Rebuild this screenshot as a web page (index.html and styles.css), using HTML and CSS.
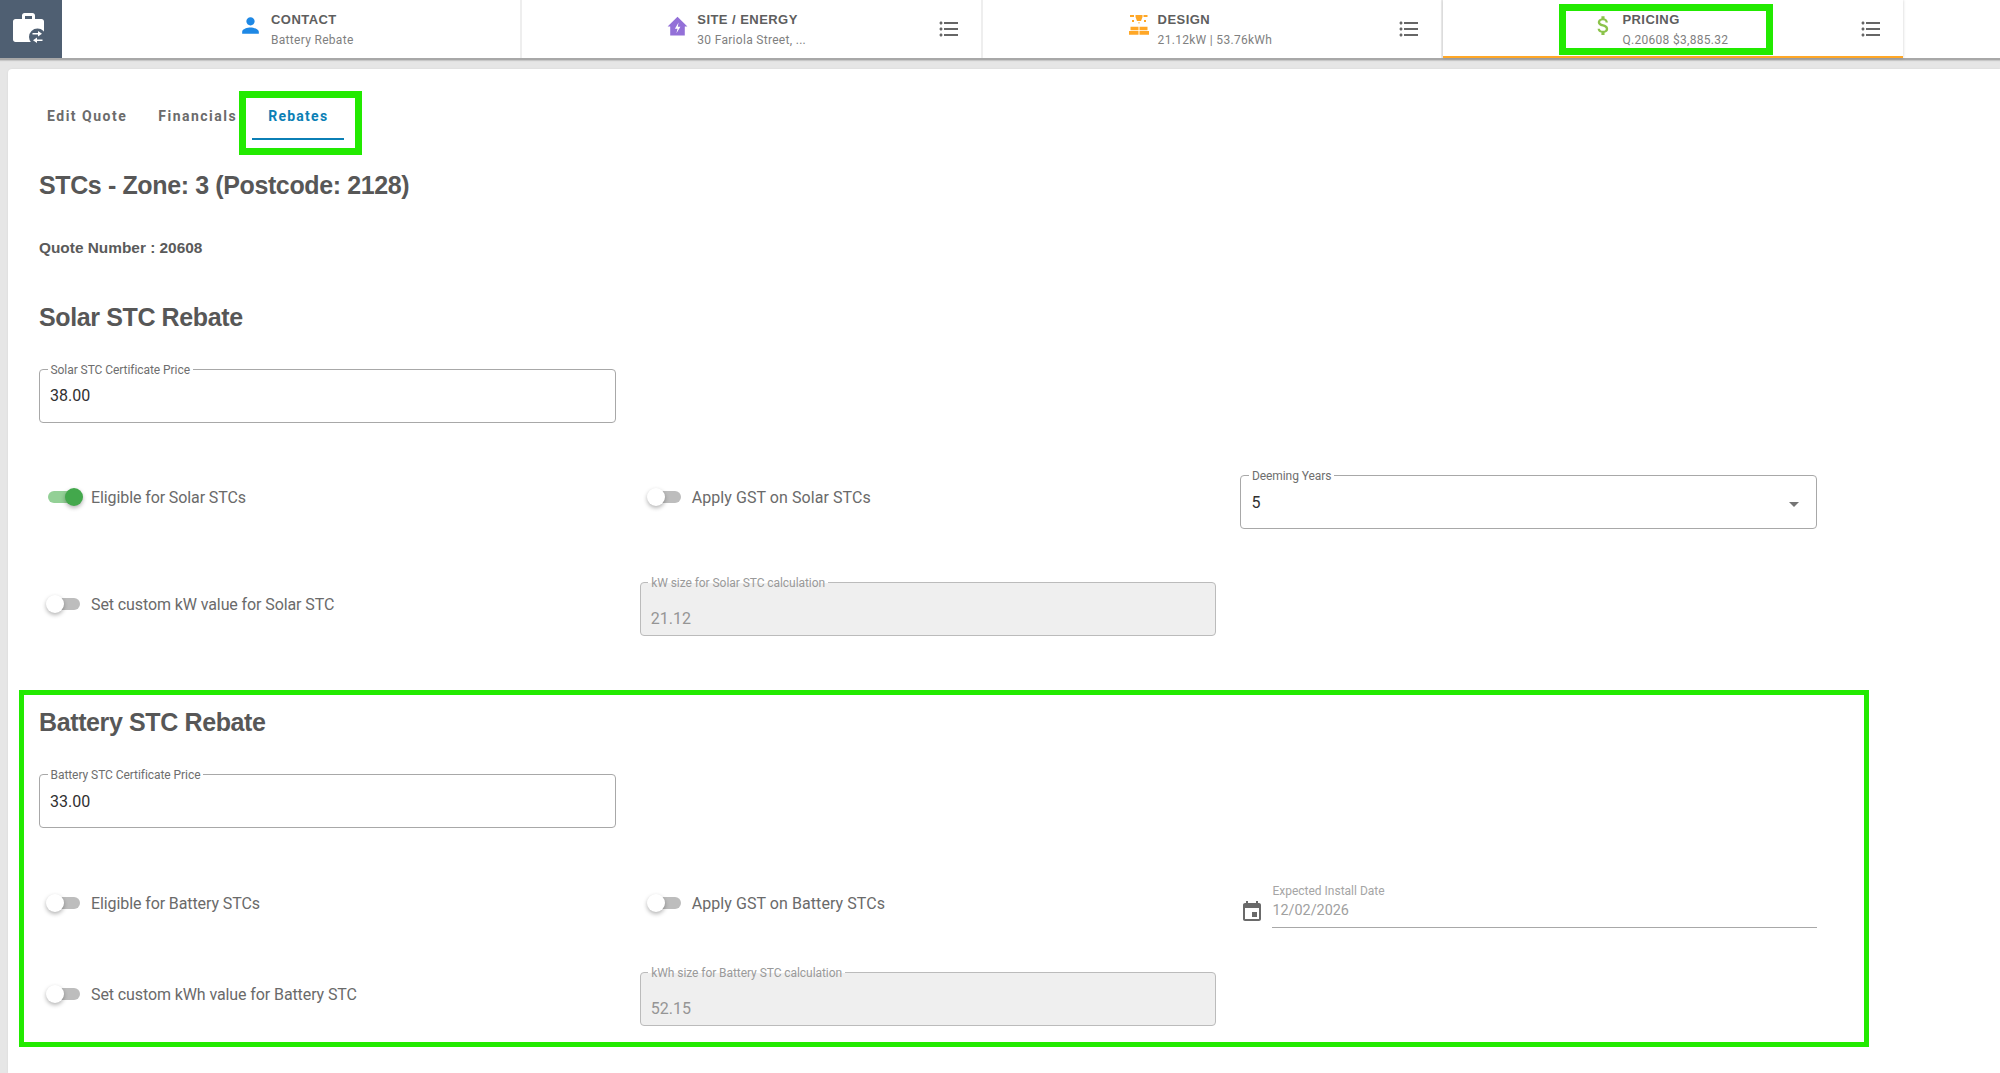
FILE: index.html
```html
<!DOCTYPE html>
<html lang="en">
<head>
<meta charset="utf-8">
<title>Rebates</title>
<link rel="stylesheet" href="styles.css">
</head>
<body>
<div class="page">
  <header class="topbar">
    <div class="logo">
      <svg width="62" height="58" viewBox="0 0 62 58"><path fill="#fff" fill-rule="evenodd" d="M22 19v-3.500c0-1.400 1.100-2.500 2.500-2.500h8c1.400 0 2.500 1.100 2.500 2.500V19h6.500c1.400 0 2.500 1.100 2.500 2.500v18c0 1.400-1.100 2.500-2.500 2.500h-26c-1.400 0-2.500-1.100-2.500-2.500v-18c0-1.400 1.100-2.500 2.500-2.500zM25 19h7v-3h-7z"/><circle cx="37.500" cy="37" r="8.500" fill="#4f5f72"/><path fill="#fff" d="M38 31l4 2.750-4 2.750v-2h-5.500v-1.500H38zM37 37.500v2h5.500V41H37v2l-4-2.750z"/></svg>
    </div>
    <div class="tab tab-contact">
      <svg class="tab-icon" viewBox="0 0 24 24"><path fill="#1e88e5" d="M12 12c2.210 0 4-1.790 4-4s-1.790-4-4-4-4 1.790-4 4 1.790 4 4 4zm0 2c-2.670 0-8 1.340-8 4v2h16v-2c0-2.660-5.330-4-8-4z"/></svg>
      <div class="tab-text"><div class="tab-title">CONTACT</div><div class="tab-sub">Battery Rebate</div></div>
    </div>
    <div class="tab tab-site">
      <svg class="tab-icon" viewBox="0 0 24 24"><path fill="#9370d8" fill-rule="evenodd" d="M12 3.500 2.500 13H5v8.500h14V13h2.500zM13 9l-3.500 6H12l-1 4.500 3.800-6.300H12.300z"/></svg>
      <div class="tab-text"><div class="tab-title">SITE / ENERGY</div><div class="tab-sub">30 Fariola Street, ...</div></div>
      <svg class="menu" viewBox="0 0 24 24"><path d="M4 10.500c-.83 0-1.500.67-1.500 1.500s.67 1.500 1.500 1.500 1.500-.67 1.500-1.500-.67-1.500-1.500-1.500zm0-6c-.83 0-1.500.67-1.500 1.500S3.170 7.500 4 7.500 5.500 6.830 5.500 6 4.830 4.500 4 4.500zm0 12c-.83 0-1.500.68-1.500 1.500s.68 1.500 1.500 1.500 1.500-.68 1.500-1.500-.67-1.500-1.500-1.500zM7 19h14v-2H7v2zm0-6h14v-2H7v2zm0-8v2h14V5H7z"/></svg>
    </div>
    <div class="tab tab-design">
      <svg class="tab-icon" viewBox="0 0 22 22"><path fill="#ffa726" d="M2 1h4v2H2zM7.500 1h7v2l-1.500 4H9L7.500 3zM15.500 1h4v2h-4zM4 6h2v2H4zM16 6h2v2h-2zM10.500 8h1v1.500h-1zM2.500 12.700h8v3.600h-8zM11.500 12.700h8v3.600h-8zM1 17h9.500v3.700H1zM11.500 17H21v3.700h-9.500z"/></svg>
      <div class="tab-text"><div class="tab-title">DESIGN</div><div class="tab-sub">21.12kW | 53.76kWh</div></div>
      <svg class="menu" viewBox="0 0 24 24"><path d="M4 10.500c-.83 0-1.500.67-1.500 1.500s.67 1.500 1.500 1.500 1.500-.67 1.500-1.500-.67-1.500-1.500-1.500zm0-6c-.83 0-1.500.67-1.500 1.500S3.170 7.500 4 7.500 5.500 6.830 5.500 6 4.830 4.500 4 4.500zm0 12c-.83 0-1.500.68-1.500 1.500s.68 1.500 1.500 1.500 1.500-.68 1.500-1.500-.67-1.500-1.500-1.500zM7 19h14v-2H7v2zm0-6h14v-2H7v2zm0-8v2h14V5H7z"/></svg>
    </div>
    <div class="tab tab-pricing">
      <svg class="tab-icon" viewBox="0 0 24 24"><path fill="#8bc34a" d="M11.800 10.900c-2.270-.59-3-1.200-3-2.150 0-1.090 1.010-1.850 2.700-1.850 1.780 0 2.440.85 2.500 2.100h2.210c-.07-1.720-1.120-3.300-3.210-3.810V3h-3v2.160c-1.940.42-3.500 1.680-3.500 3.610 0 2.310 1.910 3.460 4.700 4.130 2.500.6 3 1.480 3 2.410 0 .69-.49 1.790-2.700 1.790-2.060 0-2.870-.92-2.980-2.100h-2.200c.12 2.190 1.760 3.420 3.680 3.830V21h3v-2.150c1.950-.37 3.500-1.500 3.500-3.550 0-2.840-2.430-3.810-4.700-4.400z"/></svg>
      <div class="tab-text"><div class="tab-title">PRICING</div><div class="tab-sub">Q.20608 $3,885.32</div></div>
      <svg class="menu" viewBox="0 0 24 24"><path d="M4 10.500c-.83 0-1.500.67-1.500 1.500s.67 1.500 1.500 1.500 1.500-.67 1.500-1.500-.67-1.500-1.500-1.500zm0-6c-.83 0-1.500.67-1.500 1.500S3.170 7.500 4 7.500 5.500 6.830 5.500 6 4.830 4.500 4 4.500zm0 12c-.83 0-1.500.68-1.500 1.500s.68 1.500 1.500 1.500 1.500-.68 1.500-1.500-.67-1.500-1.500-1.500zM7 19h14v-2H7v2zm0-6h14v-2H7v2zm0-8v2h14V5H7z"/></svg>
    </div>
  </header>

  <main class="card">
    <nav class="subtabs">
      <div class="subtab">Edit Quote</div>
      <div class="subtab">Financials</div>
      <div class="subtab subtab-active">Rebates</div>
    </nav>
    <h2 class="heading heading-top">STCs - Zone: 3 (Postcode: 2128)</h2>
    <div class="quote">Quote Number : 20608</div>
    <h2 class="heading heading-solar">Solar STC Rebate</h2>

    <div class="row row-first row-solar">
      <div class="field"><span class="field-label">Solar STC Certificate Price</span><span class="field-value">38.00</span></div>
    </div>
    <div class="row">
      <div class="switch-line"><span class="switch switch-on"></span><span class="switch-label">Eligible for Solar STCs</span></div>
      <div class="switch-line"><span class="switch"></span><span class="switch-label switch-label-wide">Apply GST on Solar STCs</span></div>
      <div class="field field-select"><span class="field-label">Deeming Years</span><span class="field-value">5</span>
        <svg class="caret" viewBox="0 0 24 24"><path d="M7 10l5 5 5-5z"/></svg></div>
    </div>
    <div class="row">
      <div class="switch-line"><span class="switch"></span><span class="switch-label">Set custom kW value for Solar STC</span></div>
      <div class="field field-disabled"><span class="field-label">kW size for Solar STC calculation</span><span class="field-value">21.12</span></div>
    </div>

    <h2 class="heading heading-battery">Battery STC Rebate</h2>
    <div class="row row-first">
      <div class="field"><span class="field-label">Battery STC Certificate Price</span><span class="field-value">33.00</span></div>
    </div>
    <div class="row">
      <div class="switch-line"><span class="switch"></span><span class="switch-label">Eligible for Battery STCs</span></div>
      <div class="switch-line"><span class="switch"></span><span class="switch-label switch-label-wide">Apply GST on Battery STCs</span></div>
      <div class="date">
        <svg class="date-icon" viewBox="0 0 24 24"><path d="M17 12h-5v5h5v-5zM16 1v2H8V1H6v2H5c-1.110 0-1.990.9-1.990 2L3 19c0 1.100.89 2 2 2h14c1.100 0 2-.9 2-2V5c0-1.100-.9-2-2-2h-1V1h-2zm3 18H5V8h14v11z"/></svg>
        <div class="date-body"><div class="date-label">Expected Install Date</div><div class="date-value">12/02/2026</div></div>
      </div>
    </div>
    <div class="row row-close">
      <div class="switch-line"><span class="switch"></span><span class="switch-label">Set custom kWh value for Battery STC</span></div>
      <div class="field field-disabled"><span class="field-label">kWh size for Battery STC calculation</span><span class="field-value">52.15</span></div>
    </div>
  </main>

  <div class="mark mark-pricing"></div>
  <div class="mark mark-rebates"></div>
  <div class="mark mark-battery"></div>
</div>
</body>
</html>
```

FILE: styles.css
```css
* { box-sizing: border-box; }
html, body { margin: 0; height: 100%; overflow: hidden; }
body { font-family: Roboto, "Liberation Sans", sans-serif; color: #616161; background: #e6e6e6; }
.page { position: relative; display: flex; flex-direction: column; height: 1073px; }

.topbar { display: flex; height: 60px; flex: none; background: #fff; border-bottom: 2px solid #a8a8a8; box-shadow: 0 1px 1px #c8c8c8; }
.logo { width: 62px; flex: none; background: #4f5f72; display: flex; }
.tab { position: relative; width: 460.300px; flex: none; display: flex; align-items: center; border-right: 2px solid #eeeeee; }
.tab-icon { width: 25px; height: 25px; flex: none; margin: 0 8px 8px 0; }
.tab-contact { padding-left: 176px; }
.tab-site { padding-left: 143px; }
.tab-site .tab-icon { margin-right: 7px; }
.tab-design { padding-left: 145px; }
.tab-design .tab-icon { width: 22px; height: 22px; margin-right: 8px; }
.tab-pricing { padding-left: 148px; border-right: none; box-shadow: inset 0 -2px 0 #ffa726, 0 0 3px rgba(0,0,0,.2); }
.tab-pricing .tab-icon { margin-right: 6.500px; }
.tab-text { display: flex; flex-direction: column; margin-top: 2px; }
.tab-title { font-size: 13px; line-height: 16px; font-weight: 700; letter-spacing: .45px; color: #5e5e5e; font-family: "Liberation Sans", Arial, sans-serif; }
.tab-sub { font-size: 12px; line-height: 16px; margin-top: 4px; letter-spacing: .3px; color: #7f7f7f; }
.menu { width: 24px; height: 24px; position: absolute; right: 20px; top: 17px; fill: #666; }

.card { flex: 1; margin: 9px 0 0 8px; background: #fff; border-radius: 4px 0 0 0; padding: 23px 0 0 31px; box-shadow: 0 0 2px rgba(0,0,0,.08); }
.subtabs { display: flex; margin-left: -8px; height: 48px; }
.subtab { padding: 0 16px; font-size: 14px; font-weight: 700; letter-spacing: 1.500px; line-height: 48px; color: #6b6b6b; height: 48px; }
.subtab + .subtab { margin-left: -1px; }
.subtab-active { color: #0b7fb5; border-bottom: 2px solid #0b7fb5; letter-spacing: 1.250px; }

.heading { margin: 0; font-family: "Liberation Sans", Arial, sans-serif; font-weight: 700; font-size: 25px; line-height: 30px; letter-spacing: -.38px; color: #575757; }
.heading-top { margin-top: 30px; }
.heading-solar { margin-top: 44px; }
.heading-battery { margin-top: 71px; }
.quote { margin-top: 38px; font-family: "Liberation Sans", Arial, sans-serif; font-weight: 700; font-size: 15.400px; line-height: 20px; color: #5a5a5a; }

.row { display: grid; grid-template-columns: repeat(3, 576.700px); column-gap: 24px; margin-top: 53px; align-items: start; }
.row-first { margin-top: 37px; }
.row-solar { margin-bottom: -1px; }
.row-solar .field-value { margin-top: -2px; }
.row-close { margin-top: 44px; }

.field { position: relative; height: 54px; border: 1.500px solid #a8a8a8; border-radius: 4px; display: flex; align-items: center; padding: 0 10px; background: #fff; }
.field-select { grid-column: 3; }
.field-label { position: absolute; left: 7.500px; top: -7px; padding: 0 3px; font-size: 12px; letter-spacing: -.06px; line-height: 14px; color: #6e6e6e; background: #fff; }
.field-value { font-size: 16px; color: #303030; }
.field-disabled { grid-column: 2; background: #efefef; border-color: #bbbbbb; align-items: flex-start; padding-top: 26px; }
.field-disabled .field-label { color: #9a9a9a; background: linear-gradient(#fff 50%, #efefef 50%); }
.field-disabled .field-value { color: #959595; line-height: 20px; }
.caret { position: absolute; right: 10px; top: 16px; width: 24px; height: 24px; fill: #757575; }

.switch-line { display: flex; align-items: center; height: 44px; padding-left: 9px; }
.switch { position: relative; display: block; width: 32px; height: 12px; border-radius: 6px; background: #bdbdbd; margin-right: 11px; flex: none; }
.switch::after { content: ""; position: absolute; left: -2px; top: -3px; width: 18px; height: 18px; border-radius: 50%; background: #fff; box-shadow: 0 2px 4px rgba(0,0,0,.3); }
.switch-on { background: #93d096; }
.switch-on::after { left: 17px; background: #43a84c; }
.switch-label { font-size: 16px; letter-spacing: -.1px; color: #6a6a6a; }
.switch-label-wide { letter-spacing: .07px; }

.date { display: flex; align-items: flex-start; }
.date-icon { width: 24px; height: 24px; flex: none; margin: 19px 8px 0 0; fill: #6a6a6a; }
.date-body { flex: 1; height: 47px; border-bottom: 1.500px solid #a8a8a8; }
.date-label { font-size: 12px; line-height: 20px; color: #a5a5a5; }
.date-value { font-size: 14.400px; line-height: 20px; color: #a0a0a0; }

.mark { position: absolute; border: 7px solid #22ea00; pointer-events: none; }
.mark-pricing { left: 1559px; top: 4px; width: 214px; height: 51px; }
.mark-rebates { left: 239px; top: 91px; width: 123px; height: 64px; }
.mark-battery { left: 19px; top: 690px; width: 1850px; height: 357px; border-width: 5px; }
```
